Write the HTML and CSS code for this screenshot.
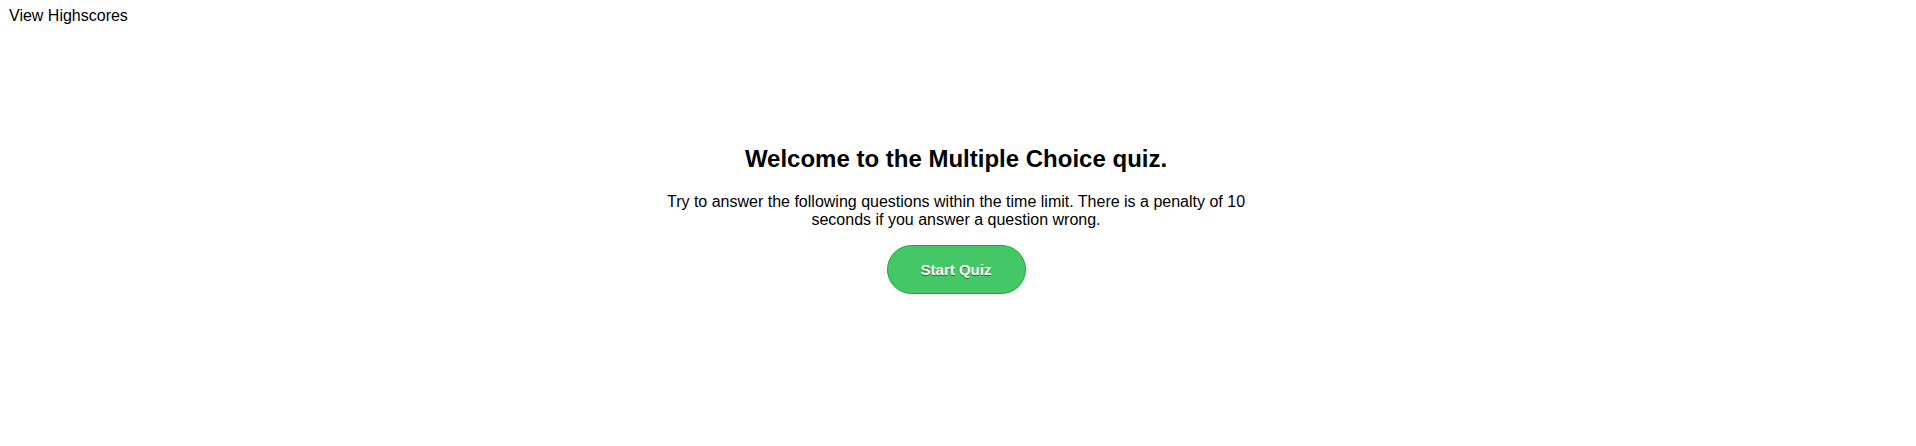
FILE: index.html
```html
<!DOCTYPE html>
<html>
<head>
<meta charset="utf-8">
<link rel="stylesheet" href="styles.css">
</head>
<body>
<header class="top">
  <a class="highscores">View Highscores</a>
</header>
<main class="intro">
  <h1 class="title">Welcome to the Multiple Choice quiz.</h1>
  <p class="desc">Try to answer the following questions within the time limit. There is a penalty of 10 seconds if you answer a question wrong.</p>
  <button class="start">Start Quiz</button>
</main>
</body>
</html>
```
FILE: styles.css
```css
html, body {
  margin: 0;
  background: #fff;
  font-family: "Liberation Sans", Arial, sans-serif;
  color: #000;
}
.top {
  padding: 7px 8px 0 9px;
  font-size: 16px;
}
.highscores {
  color: #000;
  cursor: pointer;
}
.intro {
  display: flex;
  flex-direction: column;
  align-items: center;
  padding: 120px 4px 0 0;
  text-align: center;
}
.title {
  margin: 0;
  font-size: 24px;
  font-weight: bold;
}
.desc {
  margin: 20px 0 16px;
  width: 600px;
  font-size: 16px;
}
.start {
  width: 139px;
  height: 49px;
  padding: 0;
  background: #44c767;
  border: 1px solid #18ab29;
  border-radius: 25px;
  color: #fff;
  font-family: "Liberation Sans", Arial, sans-serif;
  font-weight: bold;
  font-size: 15px;
  text-shadow: 0 1px 0 #2f6627;
  cursor: pointer;
}
```
